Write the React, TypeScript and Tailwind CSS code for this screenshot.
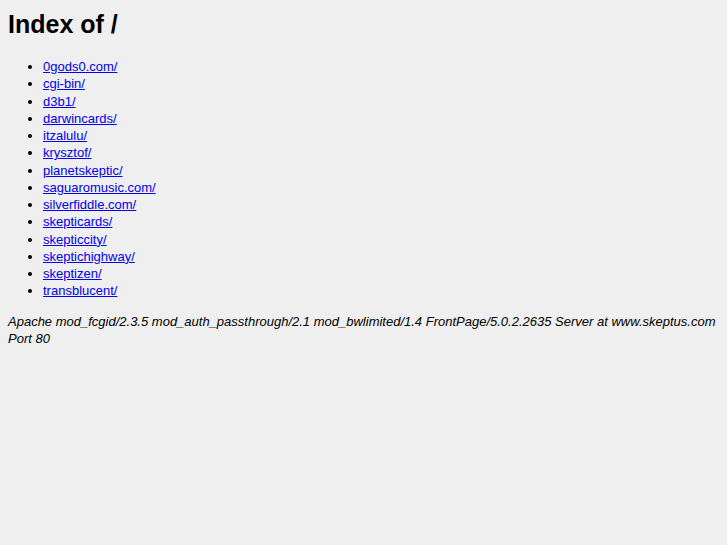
import React from "react";

const dirs = [
  "0gods0.com/",
  "cgi-bin/",
  "d3b1/",
  "darwincards/",
  "itzalulu/",
  "krysztof/",
  "planetskeptic/",
  "saguaromusic.com/",
  "silverfiddle.com/",
  "skepticards/",
  "skepticcity/",
  "skeptichighway/",
  "skeptizen/",
  "transblucent/",
];

function App() {
  return (
    <div className="min-h-screen bg-[#efefef] p-2 text-black font-['Liberation_Sans',Arial,sans-serif]">
      <h1 className="text-[25px] leading-[32px] font-bold">Index of /</h1>
      <ul className="list-disc pl-[35px] mt-[18px] text-[13px] leading-[17.25px]">
        {dirs.map((d) => (
          <li key={d}>
            <a href={"/" + d} className="text-[#0000ee] underline">
              {d}
            </a>
          </li>
        ))}
      </ul>
      <address className="mt-[13px] text-[13px] leading-[17px] italic">
        Apache mod_fcgid/2.3.5 mod_auth_passthrough/2.1 mod_bwlimited/1.4
        FrontPage/5.0.2.2635 Server at www.skeptus.com Port 80
      </address>
    </div>
  );
}

export default App;
